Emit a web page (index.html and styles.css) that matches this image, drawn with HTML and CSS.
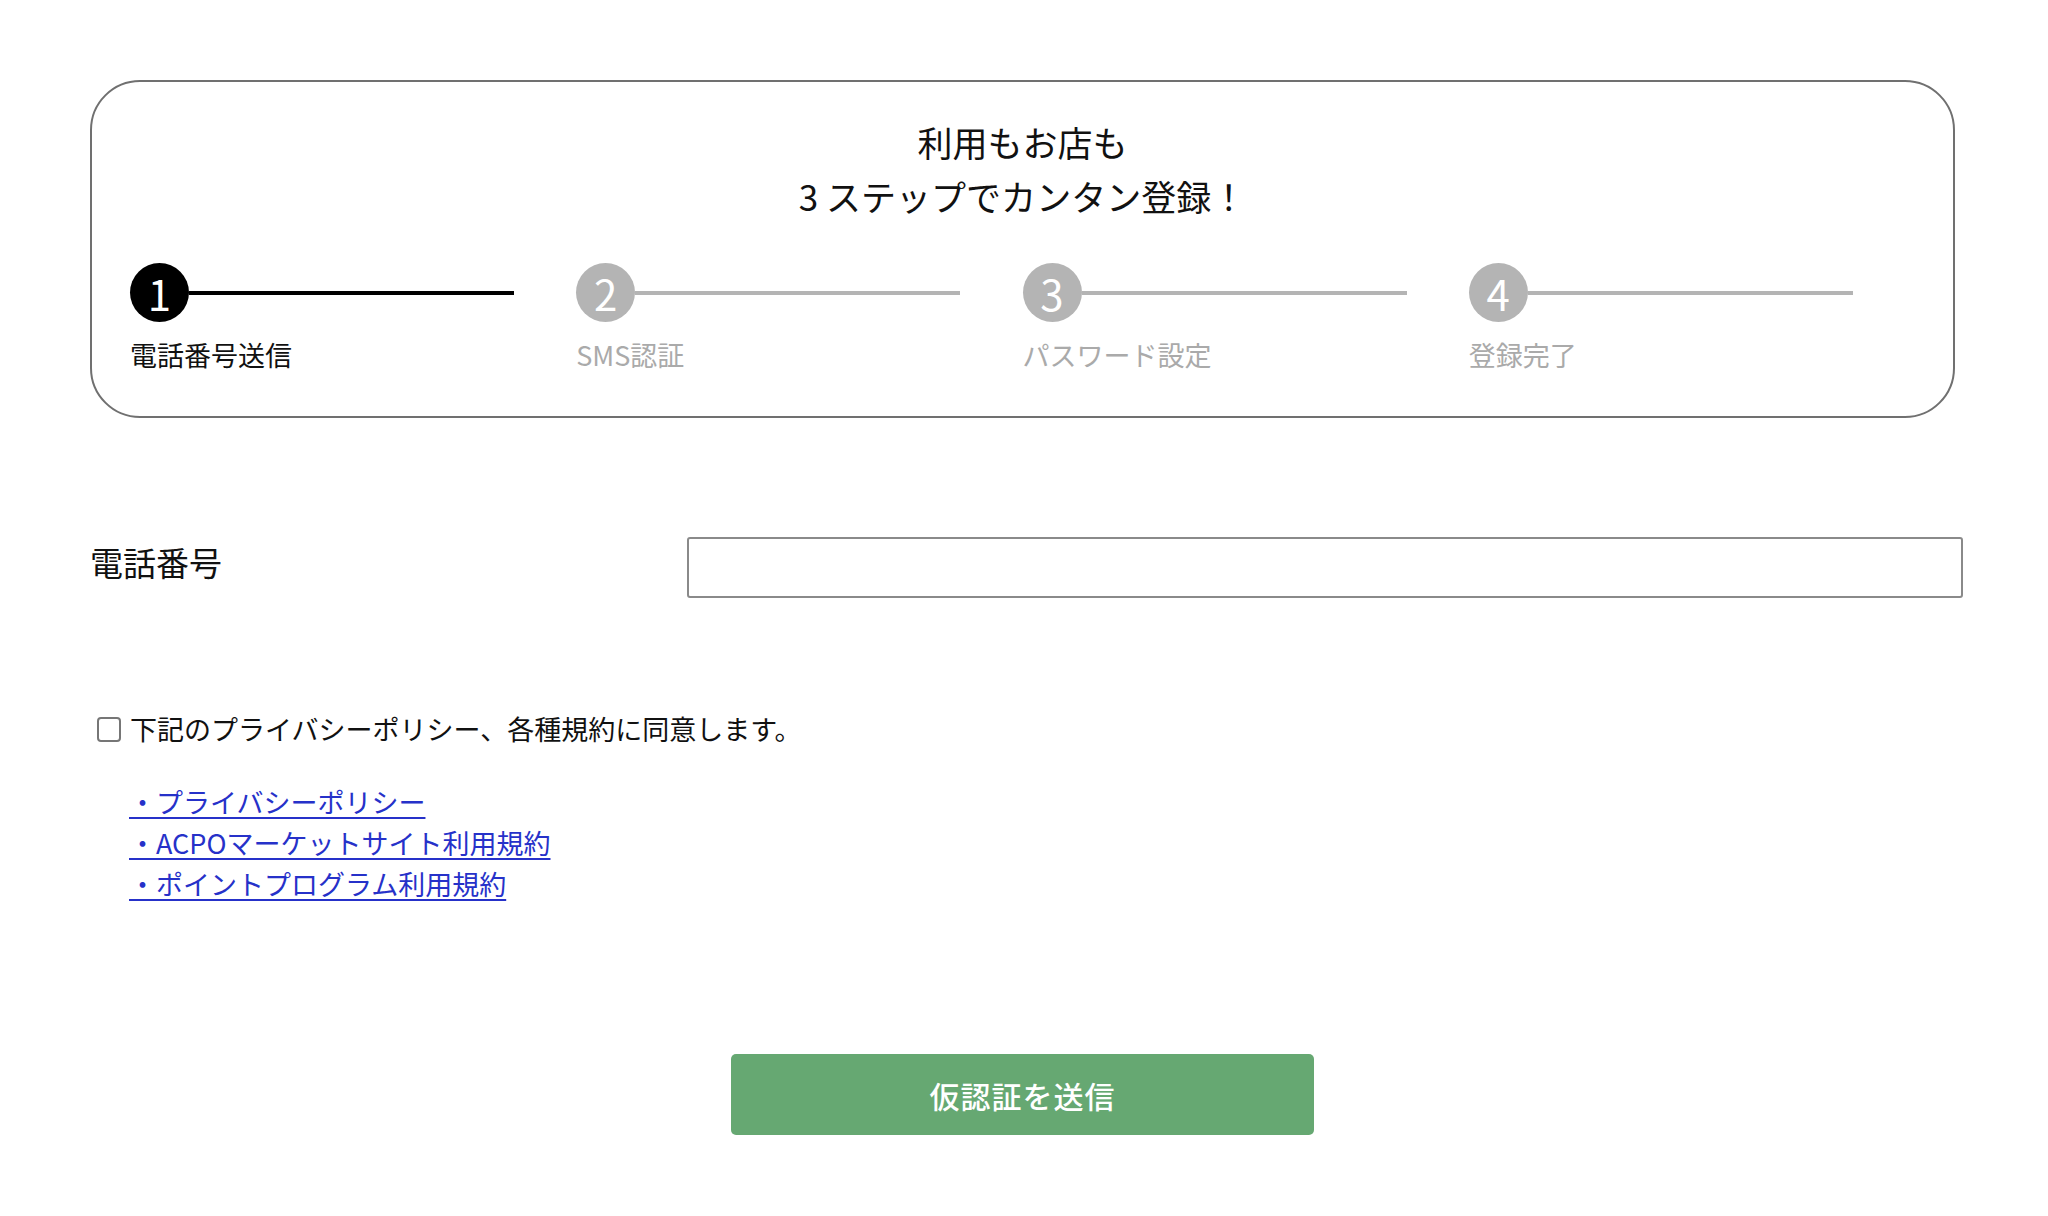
FILE: index.html
```html
<!DOCTYPE html>
<html lang="ja">
<head>
<meta charset="utf-8">
<title>電話番号送信</title>
<link rel="stylesheet" href="styles.css">
</head>
<body>
<main class="page">
  <section class="steps-card">
    <h1 class="steps-title">利用もお店も<br>3 ステップでカンタン登録！</h1>
    <ol class="steps">
      <li class="step is-active">
        <div class="step-head"><span class="step-num">1</span><span class="step-line"></span></div>
        <span class="step-label">電話番号送信</span>
      </li>
      <li class="step">
        <div class="step-head"><span class="step-num">2</span><span class="step-line"></span></div>
        <span class="step-label">SMS認証</span>
      </li>
      <li class="step">
        <div class="step-head"><span class="step-num">3</span><span class="step-line"></span></div>
        <span class="step-label">パスワード設定</span>
      </li>
      <li class="step">
        <div class="step-head"><span class="step-num">4</span><span class="step-line"></span></div>
        <span class="step-label">登録完了</span>
      </li>
    </ol>
  </section>

  <form class="form">
    <div class="field">
      <label class="field-label" for="tel">電話番号</label>
      <input class="field-input" id="tel" type="tel">
    </div>

    <label class="agree">
      <input class="agree-box" type="checkbox">
      <span>下記のプライバシーポリシー、各種規約に同意します。</span>
    </label>

    <ul class="links">
      <li><a href="#">・プライバシーポリシー</a></li>
      <li><a href="#">・ACPOマーケットサイト利用規約</a></li>
      <li><a href="#">・ポイントプログラム利用規約</a></li>
    </ul>

    <div class="actions">
      <button class="submit" type="button">仮認証を送信</button>
    </div>
  </form>
</main>
</body>
</html>
```
FILE: styles.css
```css
* { box-sizing: border-box; }

html, body {
  margin: 0;
  padding: 0;
  background: #ffffff;
}

body {
  font-family: "Noto Sans CJK JP", "Noto Sans", "Liberation Sans", sans-serif;
  color: #111111;
}

.page {
  width: 1955px;
  padding: 80px 0 0 90px;
}

.steps-card {
  border: 2px solid #707070;
  border-radius: 50px;
  padding: 33px 38px 41px 38px;
  height: 338px;
}

.steps-title {
  margin: 0;
  text-align: center;
  font-size: 35px;
  font-weight: 400;
  line-height: 54px;
  color: #111;
}

.steps {
  list-style: none;
  margin: 40px 0 0 0;
  padding: 0;
  display: flex;
}

.step {
  width: 447px;
  display: flex;
  flex-direction: column;
  align-items: flex-start;
}

.step-head {
  display: flex;
  align-items: center;
  width: 384px;
}

.step-num {
  flex: none;
  width: 59px;
  height: 59px;
  border-radius: 50%;
  background: #b4b4b4;
  color: #fff;
  font-size: 42px;
  line-height: 59px;
  text-align: center;
  font-weight: 400;
}

.step-line {
  flex: 1;
  height: 4px;
  background: #b4b4b4;
}

.step-label {
  margin-top: 13px;
  font-size: 27px;
  line-height: 40px;
  color: #aaaaaa;
}

.step.is-active .step-num,
.step.is-active .step-line {
  background: #000;
}

.step.is-active .step-label {
  color: #111;
}

.form {
  display: flex;
  flex-direction: column;
}

.field {
  margin-top: 119px;
  display: flex;
  align-items: flex-start;
  width: 1873px;
}

.field-label {
  width: 597px;
  flex: none;
  font-size: 33px;
  line-height: 50px;
  color: #111;
}

.field-input {
  flex: 1;
  height: 61px;
  border: 2px solid #8a8a8a;
  border-radius: 3px;
  font-size: 28px;
  padding: 0 14px;
  background: #fff;
}

.agree {
  margin-top: 111px;
  display: flex;
  align-items: center;
  font-size: 27px;
  line-height: 40px;
  color: #111;
}

.agree-box {
  appearance: none;
  -webkit-appearance: none;
  width: 24px;
  height: 25px;
  margin: 0 9px 0 7px;
  border: 2px solid #767676;
  border-radius: 4px;
  background: #fff;
}

.links {
  list-style: none;
  margin: 32px 0 0 39px;
  padding: 0;
  font-size: 27px;
  line-height: 41px;
}

.links a {
  color: #2631c9;
  text-decoration: underline;
  text-underline-offset: 4px;
  text-decoration-thickness: 2px;
}

.actions {
  display: flex;
  justify-content: center;
  margin-top: 150px;
}

.submit {
  width: 583px;
  height: 81px;
  border: none;
  border-radius: 5px;
  background: #66a872;
  color: #fff;
  font-family: inherit;
  font-size: 30px;
  font-weight: 500;
  letter-spacing: 1px;
}
```
